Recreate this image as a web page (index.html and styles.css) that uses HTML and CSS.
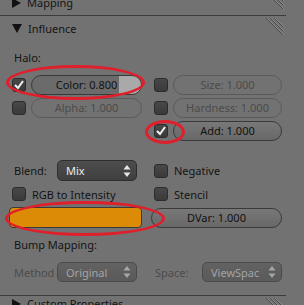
FILE: index.html
```html
<!DOCTYPE html>
<html lang="en">
<head>
    <meta charset="UTF-8">
    <title>Influence</title>
    <link rel="stylesheet" href="styles.css">
</head>

<body>
    <div class="props">
        <!-- collapsed panel above, cut by the window -->
        <div class="head head-mapping">
            <span class="tri tri-right"></span>
            <span class="head-title">Mapping</span>
            <svg class="grip" width="19" height="19" viewBox="0 0 19 19">
                <path d="M1 1 L18 18 M5 1 L18 14 M9 1 L18 10" stroke="#8a8a8a" stroke-width="1" fill="none"/>
                <path d="M0 1 L17 18 M4 1 L17 14 M8 1 L17 10" stroke="#4a4a4a" stroke-width="1" fill="none"/>
            </svg>
        </div>

        <div class="head head-open">
            <span class="tri tri-down"></span>
            <span class="head-title">Influence</span>
            <svg class="grip" width="19" height="19" viewBox="0 0 19 19">
                <path d="M1 1 L18 18 M5 1 L18 14 M9 1 L18 10" stroke="#8a8a8a" stroke-width="1" fill="none"/>
                <path d="M0 1 L17 18 M4 1 L17 14 M8 1 L17 10" stroke="#4a4a4a" stroke-width="1" fill="none"/>
            </svg>
        </div>

        <div class="body">
            <div class="label label-halo">Halo:</div>

            <div class="grid grid-halo">
                <div class="cell">
                    <span class="check on"><svg width="12" height="12" viewBox="0 0 12 12"><path d="M2 6 L5 9 L10 2" stroke="#f2f2f2" stroke-width="2" fill="none"/></svg></span>
                    <span class="num slider">Color: 0.800</span>
                </div>
                <div class="cell">
                    <span class="check"></span>
                    <span class="num off">Size: 1.000</span>
                </div>
                <div class="cell">
                    <span class="check"></span>
                    <span class="num off">Alpha: 1.000</span>
                </div>
                <div class="cell">
                    <span class="check"></span>
                    <span class="num off">Hardness: 1.000</span>
                </div>
                <div class="cell"></div>
                <div class="cell">
                    <span class="check on"><svg width="12" height="12" viewBox="0 0 12 12"><path d="M2 6 L5 9 L10 2" stroke="#f2f2f2" stroke-width="2" fill="none"/></svg></span>
                    <span class="num">Add: 1.000</span>
                </div>
            </div>

            <div class="grid grid-opts">
                <div class="cell">
                    <span class="field-label">Blend:</span>
                    <span class="drop">Mix
                        <svg width="8" height="14" viewBox="0 0 8 14"><path d="M4 1 L7.5 5.5 L0.5 5.5 Z M4 13 L7.5 8.5 L0.5 8.5 Z" fill="#e6e6e6"/></svg>
                    </span>
                </div>
                <div class="cell">
                    <span class="check"></span>
                    <span class="check-label">Negative</span>
                </div>
                <div class="cell">
                    <span class="check"></span>
                    <span class="check-label">RGB to Intensity</span>
                </div>
                <div class="cell">
                    <span class="check"></span>
                    <span class="check-label">Stencil</span>
                </div>
                <div class="cell">
                    <span class="swatch"></span>
                </div>
                <div class="cell">
                    <span class="num">DVar: 1.000</span>
                </div>
            </div>

            <div class="label label-bump">Bump Mapping:</div>

            <div class="grid grid-bump">
                <div class="cell">
                    <span class="field-label dim">Method</span>
                    <span class="drop drop-off">Original
                        <svg width="8" height="14" viewBox="0 0 8 14"><path d="M4 1 L7.5 5.5 L0.5 5.5 Z M4 13 L7.5 8.5 L0.5 8.5 Z" fill="#a6a6a6"/></svg>
                    </span>
                </div>
                <div class="cell">
                    <span class="field-label field-space dim">Space:</span>
                    <span class="drop drop-off">ViewSpac
                        <svg width="8" height="14" viewBox="0 0 8 14"><path d="M4 1 L7.5 5.5 L0.5 5.5 Z M4 13 L7.5 8.5 L0.5 8.5 Z" fill="#a6a6a6"/></svg>
                    </span>
                </div>
            </div>
        </div>

        <div class="head head-custom">
            <span class="tri tri-right"></span>
            <span class="head-title">Custom Properties</span>
            <svg class="grip" width="19" height="19" viewBox="0 0 19 19">
                <path d="M1 1 L18 18 M5 1 L18 14 M9 1 L18 10" stroke="#8a8a8a" stroke-width="1" fill="none"/>
                <path d="M0 1 L17 18 M4 1 L17 14 M8 1 L17 10" stroke="#4a4a4a" stroke-width="1" fill="none"/>
            </svg>
        </div>
    </div>

    <!-- red annotation rings drawn over the panel -->
    <div class="mark mark-color"></div>
    <div class="mark mark-add"></div>
    <div class="mark mark-swatch"></div>
</body>
</html>
```

FILE: styles.css
```css
body {
    margin: 0;
    background-color: #727272;
    font-family: "Noto Sans", "Open Sans", sans-serif;
    font-size: 11px;
    color: #141414;
    overflow: hidden;
}

.props {
    width: 286px;
}

/* panel headers */
.head {
    display: flex;
    align-items: center;
    height: 24px;
    padding-left: 12px;
}
.head-mapping {
    height: 25px;
    margin-top: -10px;
}
.head-open {
    border-top: 1px solid #3c3c3c;
}
.head-custom {
    margin-top: 13px;
    border-top: 1px solid #3c3c3c;
    align-items: flex-start;
}
.head-title {
    margin-left: 6px;
    line-height: 15px;
}
.tri {
    width: 0;
    height: 0;
}
.tri-down {
    border-left: 5px solid transparent;
    border-right: 5px solid transparent;
    border-top: 9px solid #111;
}
.tri-right {
    border-top: 5px solid transparent;
    border-bottom: 5px solid transparent;
    border-left: 9px solid #111;
}
.head-custom .tri-right {
    margin-top: 3px;
}
.grip {
    margin-left: auto;
    margin-right: 1px;
    align-self: flex-start;
    margin-top: 1px;
}

/* panel body */
.body {
    padding-left: 9px;
}
.label {
    height: 16px;
    line-height: 16px;
    padding-left: 5px;
}
.label-halo {
    margin-top: 10px;
}
.label-bump {
    margin-top: 9px;
}

.grid {
    display: grid;
    grid-template-columns: 133px 131px;
    column-gap: 9px;
    row-gap: 3px;
}
.grid-halo {
    margin-top: 9px;
    grid-auto-rows: 20px;
}
.grid-opts {
    margin-top: 19px;
    grid-template-rows: 21px 20px 21px;
}
.grid-bump {
    margin-top: 9px;
    grid-auto-rows: 20px;
}
.cell {
    display: flex;
    align-items: center;
}

/* checkboxes */
.check {
    display: flex;
    align-items: center;
    justify-content: center;
    box-sizing: border-box;
    width: 14px;
    height: 14px;
    margin-left: 3px;
    margin-right: 5px;
    border: 1px solid #2c2c2c;
    border-radius: 3px;
    background: linear-gradient(#484848, #3a3a3a);
    flex: none;
}
.check-label {
    margin-left: 1px;
}

/* number fields */
.num {
    flex: 1;
    box-sizing: border-box;
    height: 20px;
    line-height: 18px;
    border: 1px solid #393939;
    border-radius: 10px;
    text-align: center;
    color: #111;
    background: linear-gradient(#787878, #686868);
}
.num.off {
    border-color: #5b5b5b;
    color: #4b4b4b;
    background: none;
}
.slider {
    background: linear-gradient(to right, #6b6b6b 80%, #a9a9a9 80%);
}

/* dropdowns */
.field-label {
    width: 48px;
    padding-left: 5px;
    box-sizing: border-box;
}
.field-space {
    width: 51px;
    padding-left: 4px;
}
.dim {
    color: #4c4c4c;
}
.drop {
    display: flex;
    align-items: center;
    justify-content: space-between;
    box-sizing: border-box;
    width: 80px;
    height: 21px;
    padding: 0 5px 0 8px;
    border: 1px solid #2e2e2e;
    border-radius: 5px;
    background: linear-gradient(#4d4d4d, #3f3f3f);
    color: #ececec;
}
.drop-off {
    height: 20px;
    border-color: #4b4b4b;
    background: linear-gradient(#626262, #5a5a5a);
    color: #a4a4a4;
}

.swatch {
    flex: 1;
    height: 21px;
    box-sizing: border-box;
    border: 1px solid #3a3a3a;
    border-radius: 4px;
    background-color: #dc8b06;
}

/* annotation rings */
.mark {
    position: absolute;
    box-sizing: border-box;
    border: 3px solid #df1f2b;
    border-radius: 50%;
}
.mark-color {
    left: 6px;
    top: 65px;
    width: 139px;
    height: 35px;
}
.mark-add {
    left: 145px;
    top: 120px;
    width: 40px;
    height: 24px;
}
.mark-swatch {
    left: 5px;
    top: 201px;
    width: 160px;
    height: 35px;
}
```
